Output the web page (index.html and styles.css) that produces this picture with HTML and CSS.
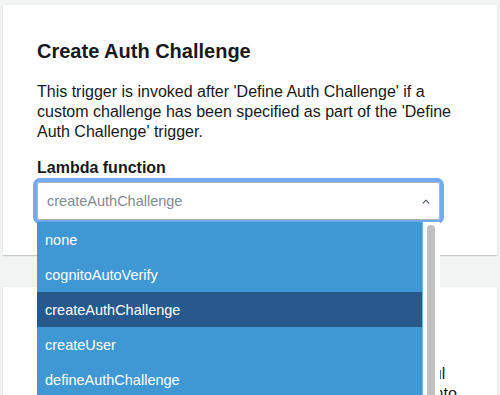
FILE: index.html
```html
<!DOCTYPE html>
<html lang="en">
<head>
<meta charset="utf-8">
<title>Create Auth Challenge</title>
<link rel="stylesheet" href="styles.css">
</head>
<body>
<main class="page">
  <section class="card">
    <h2 class="card-title">Create Auth Challenge</h2>
    <p class="card-desc">This trigger is invoked after 'Define Auth Challenge' if a custom challenge has been specified as part of the 'Define Auth Challenge' trigger.</p>
    <label class="field-label">Lambda function</label>
    <div class="select-wrap">
      <div class="select">
        <span class="select-value">createAuthChallenge</span>
        <svg class="chevron" width="8" height="5" viewBox="0 0 8 5" aria-hidden="true">
          <polyline points="0.8,4.4 4,1.2 7.2,4.4" fill="none" stroke="#454b53" stroke-width="1.1"/>
        </svg>
      </div>
      <div class="dropdown">
        <ul class="options">
          <li class="option">none</li>
          <li class="option">cognitoAutoVerify</li>
          <li class="option selected">createAuthChallenge</li>
          <li class="option">createUser</li>
          <li class="option">defineAuthChallenge</li>
          <li class="option">verifyAuthChallenge</li>
        </ul>
        <div class="scrollbar"><div class="thumb"></div></div>
      </div>
    </div>
  </section>
  <section class="card">
    <h2 class="card-title">Post Authentication</h2>
    <p class="card-desc">Amazon Cognito invokes the trigger after each successful authentication of the user, so you can add custom logic into your app's sign-in flow.</p>
  </section>
</main>
</body>
</html>
```
FILE: styles.css
```css
* { box-sizing: border-box; }

body {
  margin: 0;
  background: #f2f3f3;
  font-family: "Liberation Sans", Arial, Helvetica, sans-serif;
  color: #16191f;
}

.page {
  display: flex;
  flex-direction: column;
  gap: 32px;
  padding: 5px 3px;
}

.card {
  background: #ffffff;
  padding: 34px 34px 35px;
  box-shadow: 0 1px 1px rgba(0, 28, 36, 0.18), 0 0 2px rgba(0, 28, 36, 0.06);
}

.card-title {
  margin: 0 0 19px;
  font-size: 20px;
  line-height: 24px;
  font-weight: 700;
}

.card-desc {
  margin: 0 0 16px;
  font-size: 16px;
  line-height: 20px;
}

.field-label {
  display: block;
  margin-bottom: 4px;
  font-size: 16px;
  line-height: 20px;
  font-weight: 700;
}

.select-wrap {
  position: relative;
  width: 403px;
}

.select {
  height: 38px;
  display: flex;
  align-items: center;
  justify-content: space-between;
  padding: 0 9px 0 9px;
  border: 1px solid #aab7b8;
  border-radius: 3px;
  outline: 4px solid #73a9f0;
  outline-offset: 0;
  background: #fff;
}

.select-value {
  font-size: 14.5px;
  color: #7f8a93;
}

.chevron { display: block; }

.dropdown {
  position: absolute;
  top: calc(100% + 2px);
  left: 0;
  width: 403px;
  height: 180px;
  display: flex;
  overflow: hidden;
  background: #fff;
  z-index: 2;
}

.options {
  flex: 1;
  margin: 0;
  padding: 0;
  list-style: none;
  background: #3f98d4;
  border-right: 1px solid #6cb7ee;
}

.option {
  height: 35px;
  line-height: 36px;
  padding-left: 8px;
  font-size: 14.5px;
  color: #ffffff;
}

.option.selected {
  background: #28598d;
}

.scrollbar {
  width: 17px;
  padding: 3px 4px 0 4px;
  background: #ffffff;
}

.thumb {
  width: 8px;
  height: 300px;
  border-radius: 4px;
  background: #c1c1c1;
}
```
